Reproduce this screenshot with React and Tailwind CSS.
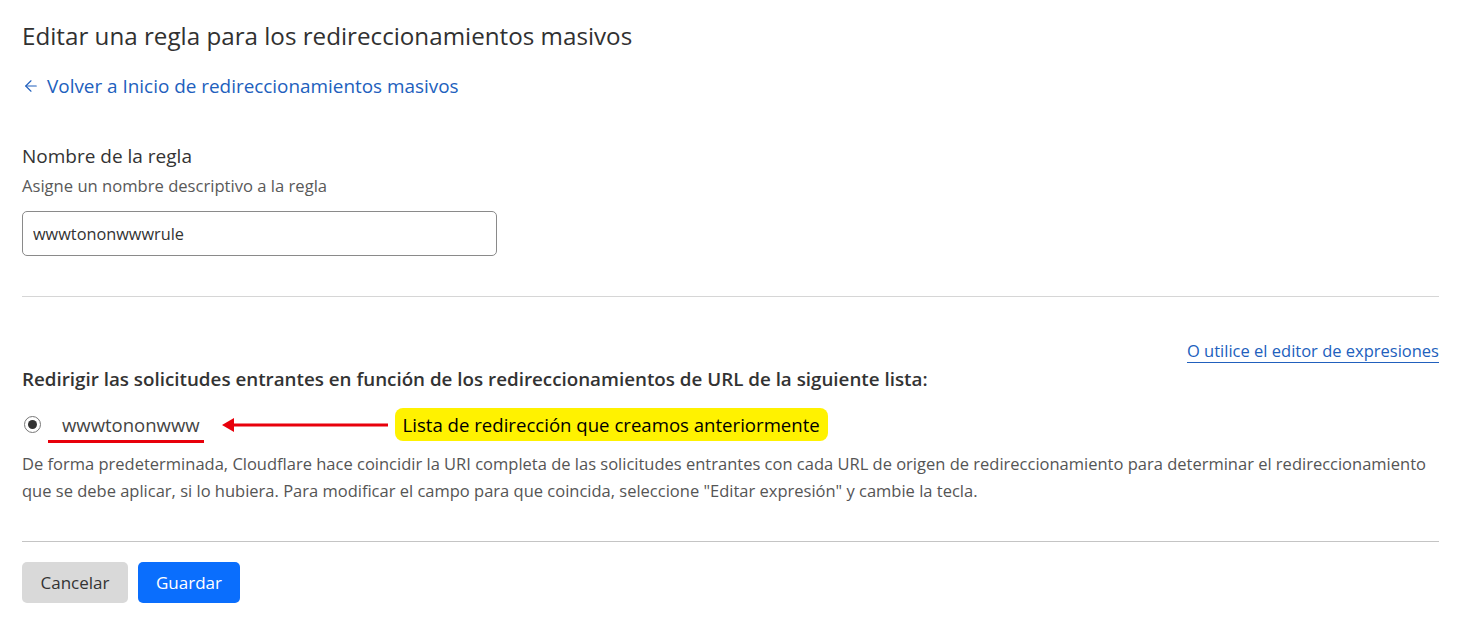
import { ArrowLeft } from "lucide-react"

export default function App() {
  return (
    <div className="min-h-screen bg-white font-['Open_Sans',sans-serif] text-[#333]">
      <div className="px-[22px] pt-[20px]">
        <h1 className="text-[24.2px] leading-[32px] text-[#313131]">
          Editar una regla para los redireccionamientos masivos
        </h1>

        <a href="#" className="mt-[20px] flex items-center gap-[7px] text-[18.9px] leading-[28px] text-[#2160bd]">
          <ArrowLeft className="h-[18px] w-[18px]" strokeWidth={1.5} />
          Volver a Inicio de redireccionamientos masivos
        </a>

        <div className="mt-[42px]">
          <div className="text-[19px] leading-[28px] text-[#333]">Nombre de la regla</div>
          <div className="mt-[4px] text-[16.6px] leading-[24px] text-[#595959]">
            Asigne un nombre descriptivo a la regla
          </div>
          <input
            readOnly
            value="wwwtononwwwrule"
            className="mt-[13px] h-[45px] w-[475px] rounded-[5px] border border-[#8a8a8a] px-[10px] text-[16.3px] text-[#333] outline-none"
          />
        </div>

        <hr className="mt-[40px] border-t border-[#d6d6d6]" />

        <div className="mt-[41px] flex justify-end">
          <a href="#" className="text-[16.5px] leading-[26px] text-[#2160bd] underline decoration-[1px] underline-offset-[5px]">
            O utilice el editor de expresiones
          </a>
        </div>

        <div className="mt-[2px] text-[18.8px] font-semibold leading-[26px] text-[#333]">
          Redirigir las solicitudes entrantes en función de los redireccionamientos de URL de la siguiente lista:
        </div>

        <div className="mt-[16px] flex items-center">
          <span className="ml-[2px] flex h-[17px] w-[17px] items-center justify-center rounded-full border border-[#777] bg-white">
            <span className="h-[9px] w-[9px] rounded-full bg-[#333]" />
          </span>
          <span className="relative ml-[21px] text-[18.5px] leading-[26px] text-[#444]">
            wwwtononwww
            <span className="absolute left-[-14px] right-[-4px] top-[28px] h-[3px] bg-[#e8000b]" />
          </span>
          <svg width="166" height="16" viewBox="0 0 166 16" className="ml-[22px]">
            <polygon points="0,8 12,1 12,15" fill="#e8000b" />
            <rect x="10" y="6.5" width="156" height="3" fill="#e8000b" />
          </svg>
          <span className="ml-[7px] rounded-[8px] bg-[#fff200] px-[8px] py-[3px] font-['Open_Sans',sans-serif] text-[18.6px] leading-[27px] text-black">
            Lista de redirección que creamos anteriormente
          </span>
        </div>

        <p className="mt-[9px] text-[16.5px] leading-[27px] text-[#555]">
          De forma predeterminada, Cloudflare hace coincidir la URI completa de las solicitudes entrantes con cada URL de origen de redireccionamiento para determinar el redireccionamiento que se debe aplicar, si lo hubiera. Para modificar el campo para que coincida, seleccione "Editar expresión" y cambie la tecla.
        </p>

        <hr className="mt-[37px] border-t border-[#c4c4c4]" />

        <div className="mt-[20px] flex gap-[10px]">
          <button className="h-[41px] w-[106px] rounded-[5px] bg-[#d9d9d9] text-[17px] text-[#333]">Cancelar</button>
          <button className="h-[41px] w-[102px] rounded-[5px] bg-[#0a6efd] text-[17px] text-white">Guardar</button>
        </div>
      </div>
    </div>
  )
}
